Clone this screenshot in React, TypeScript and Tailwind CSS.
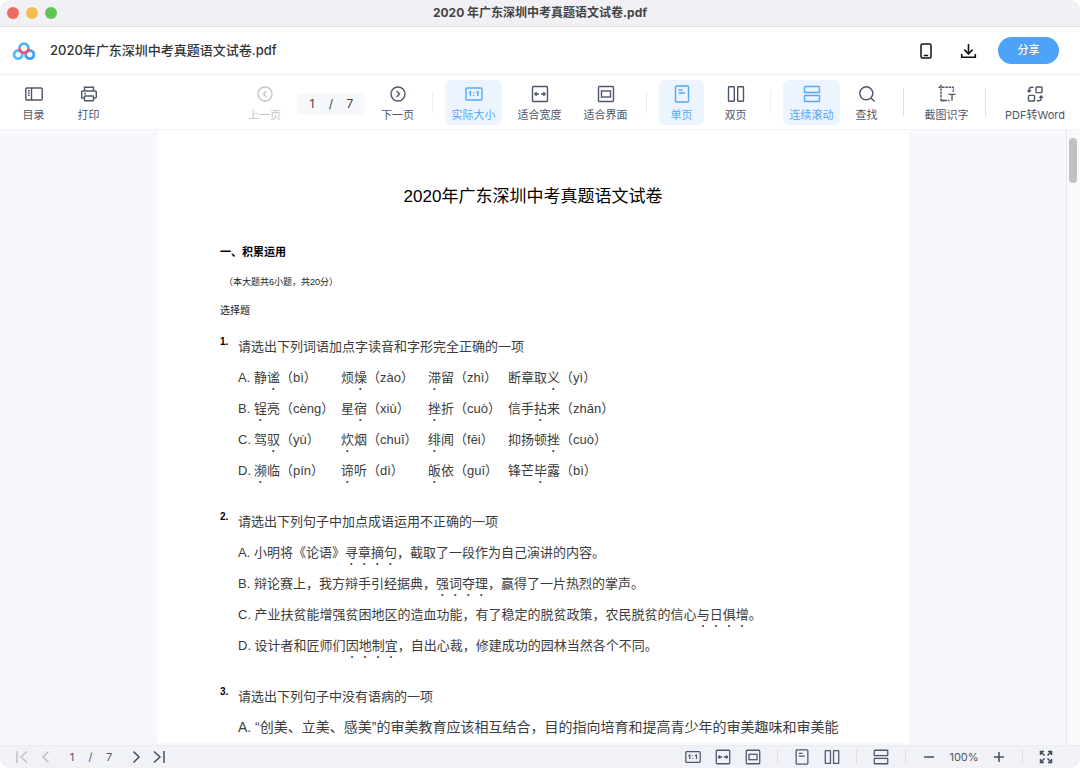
import type { ReactNode } from 'react';

type IconName =
  | 'catalog'
  | 'print'
  | 'prev'
  | 'next'
  | 'actual'
  | 'fitWidth'
  | 'fitPage'
  | 'single'
  | 'double'
  | 'scroll'
  | 'search'
  | 'ocr'
  | 'convert';

const icons: Record<IconName, ReactNode> = {
  catalog: (
    <>
      <rect x="1.8" y="4" width="16.4" height="12" rx="1" />
      <path d="M7.5 4v12M4 6.8h1.6M4 9h1.6M4 11.2h1.6" />
    </>
  ),
  print: (
    <>
      <path d="M5.5 7V3.2h9V7M5.5 14H3.7a1 1 0 0 1-1-1V8a1 1 0 0 1 1-1h12.6a1 1 0 0 1 1 1v5a1 1 0 0 1-1 1h-1.8" />
      <rect x="5.5" y="12" width="9" height="4.8" rx="0.6" />
      <path d="M5 9.6h2" />
    </>
  ),
  prev: (
    <>
      <circle cx="10" cy="10" r="7" />
      <path d="M11.5 7 8.5 10l3 3" />
    </>
  ),
  next: (
    <>
      <circle cx="10" cy="10" r="7" />
      <path d="m8.5 7 3 3-3 3" />
    </>
  ),
  actual: (
    <>
      <rect x="2" y="4" width="16" height="12" rx="1" />
      <path d="M5 8.6 6.4 7.8v4.4M12.4 8.6l1.4-.8v4.4M9.6 8.2v1M9.6 11v1" />
    </>
  ),
  fitWidth: (
    <>
      <rect x="2.5" y="2.5" width="15" height="15" rx="1" />
      <path d="M9 10H5M11 10h4M6.6 8.3 4.9 10l1.7 1.7M13.4 8.3l1.7 1.7-1.7 1.7" />
    </>
  ),
  fitPage: (
    <>
      <rect x="2.5" y="2.5" width="15" height="15" rx="1" />
      <rect x="5.5" y="7" width="9" height="6" />
    </>
  ),
  single: (
    <>
      <rect x="3.5" y="2" width="13" height="16" rx="1" />
      <path d="M6.5 6h4M6.5 9h6.5" />
    </>
  ),
  double: (
    <>
      <rect x="2.5" y="2.8" width="5.8" height="14.4" rx="0.6" />
      <rect x="11.7" y="2.8" width="5.8" height="14.4" rx="0.6" />
    </>
  ),
  scroll: (
    <>
      <rect x="2.5" y="2.5" width="15" height="6" rx="0.6" />
      <rect x="2.5" y="11.5" width="15" height="6" rx="0.6" />
    </>
  ),
  search: (
    <>
      <circle cx="9.3" cy="9.3" r="6.5" />
      <path d="m14 14 3.6 3.6" />
    </>
  ),
  ocr: (
    <>
      <path d="M4 .8v15.7h4.5M1.5 3.2h14.8v4.6" strokeDasharray="2.6 0.8" />
      <path d="M4 16.5h8.5" strokeDasharray="2.6 0.8" />
      <path d="M11.5 10.4h7M15 10.4v6.4" />
    </>
  ),
  convert: (
    <>
      <rect x="11" y="3" width="6" height="5.6" rx="0.8" />
      <rect x="3.5" y="11.4" width="6" height="5.6" rx="0.8" />
      <path d="M8.5 3.2H6.8A2.6 2.6 0 0 0 4.2 5.8v2M2.5 6.3l1.7 1.7 1.7-1.7M11.8 16.8h1.7a2.6 2.6 0 0 0 2.6-2.6v-2M14.4 13.7l1.7-1.7 1.7 1.7" />
    </>
  ),
};

function Icon({ name, className = 'size-5' }: { name: IconName; className?: string }) {
  return (
    <svg viewBox="0 0 20 20" className={className} fill="none" stroke="currentColor" strokeWidth="1.4" aria-hidden="true">
      {icons[name]}
    </svg>
  );
}

function Logo() {
  return (
    <svg viewBox="0 0 24 20" className="h-5 w-6" fill="none" strokeWidth="2.8" aria-hidden="true">
      <circle cx="6.2" cy="13.6" r="4.1" stroke="#4cc0fb" />
      <circle cx="17.8" cy="13.6" r="4.1" stroke="#3f9cf8" />
      <path d="M7.5 7.2a4.5 4.5 0 0 1 9 0" stroke="#45b4fb" />
      <path d="M7.5 7.2a4.5 4.5 0 0 0 9 0" stroke="#f0506c" />
    </svg>
  );
}

type ToolProps = {
  icon: IconName;
  label: string;
  active?: boolean;
  disabled?: boolean;
  width?: string;
};

function Tool({ icon, label, active, disabled, width = 'w-[45px]' }: ToolProps) {
  return (
    <button
      disabled={disabled}
      className={`flex h-[45px] shrink-0 flex-col items-center gap-[3px] rounded-md pt-1 text-[11px] leading-4 whitespace-nowrap ${width} ${
        active ? 'bg-[#ebf4ff] text-[#56a8fa]' : disabled ? 'text-[#c3c4c8]' : 'text-[#50566a]'
      }`}
    >
      <Icon name={icon} />
      {label}
    </button>
  );
}

function Em({ children }: { children: ReactNode }) {
  return <em className="not-italic [text-emphasis-position:under_right] [text-emphasis-style:filled_dot]">{children}</em>;
}

const words: [string, ReactNode[]][] = [
  ['A.', [<>静<Em>谧</Em>（bì）</>, <>烦<Em>燥</Em>（zào）</>, <><Em>滞</Em>留（zhì）</>, <>断章取<Em>义</Em>（yì）</>]],
  ['B.', [<><Em>锃</Em>亮（cèng）</>, <>星<Em>宿</Em>（xiù）</>, <><Em>挫</Em>折（cuò）</>, <>信手<Em>拈</Em>来（zhān）</>]],
  ['C.', [<>驾<Em>驭</Em>（yù）</>, <><Em>炊</Em>烟（chuī）</>, <><Em>绯</Em>闻（fēi）</>, <>抑扬顿<Em>挫</Em>（cuò）</>]],
  ['D.', [<><Em>濒</Em>临（pín）</>, <><Em>谛</Em>听（dì）</>, <><Em>皈</Em>依（guī）</>, <>锋芒<Em>毕</Em>露（bì）</>]],
];

function Question({ no, title, children }: { no: number; title: string; children: ReactNode }) {
  return (
    <section className="mb-5 flex text-[13px] leading-[31px] text-[#3c3c3c]">
      <span className="w-[18px] shrink-0 text-[10px] leading-[22px] font-bold text-black">{no}.</span>
      <div className="min-w-0 flex-1">
        <h3>{title}</h3>
        {children}
      </div>
    </section>
  );
}

function Document() {
  return (
    <article className="mx-auto w-full max-w-[752px] bg-white px-[63px] pt-[52px] font-['Liberation_Sans','Noto_Sans_CJK_SC',sans-serif] text-black">
      <h1 className="text-center text-[17px] leading-[30px]">2020年广东深圳中考真题语文试卷</h1>
      <h2 className="mt-[30px] text-[11px] leading-5 font-bold">一、积累运用</h2>
      <p className="mt-[10px] pl-1 text-[9px] leading-5 text-[#222]">（本大题共6小题，共20分）</p>
      <p className="mt-[9px] mb-[10px] text-[10px] leading-5 text-[#222]">选择题</p>

      <Question no={1} title="请选出下列词语加点字读音和字形完全正确的一项">
        {words.map(([letter, items]) => (
          <div key={letter} className="grid h-[31px] grid-cols-[16px_87px_87px_80px_1fr] whitespace-nowrap">
            <span>{letter}</span>
            {items.map((item, i) => (
              <span key={i}>{item}</span>
            ))}
          </div>
        ))}
      </Question>

      <Question no={2} title="请选出下列句子中加点成语运用不正确的一项">
        <p>A. 小明将《论语》<Em>寻章摘句</Em>，截取了一段作为自己演讲的内容。</p>
        <p>B. 辩论赛上，我方辩手引经据典，<Em>强词夺理</Em>，赢得了一片热烈的掌声。</p>
        <p>C. 产业扶贫能增强贫困地区的造血功能，有了稳定的脱贫政策，农民脱贫的信心<Em>与日俱增</Em>。</p>
        <p>D. 设计者和匠师们<Em>因地制宜</Em>，自出心裁，修建成功的园林当然各个不同。</p>
      </Question>

      <Question no={3} title="请选出下列句子中没有语病的一项">
        <p className="text-[14px]">A. “创美、立美、感美”的审美教育应该相互结合，目的指向培育和提高青少年的审美趣味和审美能</p>
      </Question>
    </article>
  );
}

function TopBar() {
  return (
    <>
      <div className="flex h-[27px] shrink-0 items-center border-b border-[#e2e1e6] bg-[#f1f0f5] px-[7px]">
        <div className="flex flex-1 gap-[7px]">
          <span className="size-3 rounded-full bg-[#ed6a5e]" />
          <span className="size-3 rounded-full bg-[#f4bf4f]" />
          <span className="size-3 rounded-full bg-[#61c554]" />
        </div>
        <div className="text-[12px] font-bold text-[#444]">2020 年广东深圳中考真题语文试卷.pdf</div>
        <div className="flex-1" />
      </div>
      <header className="flex h-12 shrink-0 items-center border-b border-[#ededf0] bg-white pr-[21px] pl-3">
        <Logo />
        <div className="ml-[14px] text-[13px] font-medium text-[#333]">2020年广东深圳中考真题语文试卷.pdf</div>
        <div className="ml-auto flex items-center text-[#111]">
          <button aria-label="手机查看" className="mr-[22px]">
            <svg viewBox="0 0 20 20" className="size-5" fill="none" stroke="currentColor" strokeWidth="1.5">
              <rect x="5" y="3" width="10" height="14" rx="1.5" />
              <path d="M7.8 14.5h4.4" />
            </svg>
          </button>
          <button aria-label="下载" className="mr-5">
            <svg viewBox="0 0 20 20" className="size-5" fill="none" stroke="currentColor" strokeWidth="1.6">
              <path d="M10.5 3v9.5M6.3 8.6l4.2 4.2 4.2-4.2M3.7 13v3.3h13.6V13" />
            </svg>
          </button>
          <button className="h-[27px] w-[61px] rounded-full bg-[#4da3f8] text-[11px] font-medium text-white">分享</button>
        </div>
      </header>
    </>
  );
}

function Toolbar() {
  const light = 'mx-3 h-[22px] w-px shrink-0 bg-[#efeff2]';
  const dark = 'h-7 w-px shrink-0 bg-[#dedfe3]';
  const wide = 'w-[57px]';
  return (
    <nav className="flex h-[55px] shrink-0 items-center border-b border-[#f3f4f7] bg-white pr-2 pl-[11px]">
      <div className="flex gap-[10px]">
        <Tool icon="catalog" label="目录" />
        <Tool icon="print" label="打印" />
      </div>
      <div className="ml-auto flex items-center gap-[10px]">
        <Tool icon="prev" label="上一页" disabled />
        <div className="mt-1 flex h-[22px] w-[68px] items-center rounded bg-[#f7f8fc] text-[12px] text-[#444]">
          <input aria-label="页码" defaultValue="1" className="w-[30px] min-w-0 text-center" />
          <span className="w-2 text-center">/</span>
          <span className="w-[30px] text-center">7</span>
        </div>
        <Tool icon="next" label="下一页" />
      </div>
      <span className={light} />
      <div className="flex gap-[9px]">
        <Tool icon="actual" label="实际大小" active width={wide} />
        <Tool icon="fitWidth" label="适合宽度" width={wide} />
        <Tool icon="fitPage" label="适合界面" width={wide} />
      </div>
      <span className={light} />
      <div className="flex gap-[9px]">
        <Tool icon="single" label="单页" active />
        <Tool icon="double" label="双页" />
      </div>
      <span className={light} />
      <div className="flex gap-1">
        <Tool icon="scroll" label="连续滚动" active width={wide} />
        <Tool icon="search" label="查找" />
      </div>
      <span className={`mx-[14px] ${dark}`} />
      <Tool icon="ocr" label="截图识字" width={wide} />
      <span className={`mr-3 ml-[10px] ${dark}`} />
      <Tool icon="convert" label="PDF转Word" width="w-[74px]" />
    </nav>
  );
}

function Chevron({ d, label, disabled }: { d: string; label: string; disabled?: boolean }) {
  return (
    <button aria-label={label} disabled={disabled} className={disabled ? 'text-[#bfc0c5]' : 'text-[#454c60]'}>
      <svg viewBox="0 0 16 16" className="size-4" fill="none" stroke="currentColor" strokeWidth="1.5">
        <path d={d} />
      </svg>
    </button>
  );
}

function ViewButton({ icon, label }: { icon: IconName; label: string }) {
  return (
    <button aria-label={label}>
      <Icon name={icon} className="size-[18px]" />
    </button>
  );
}

function StatusBar() {
  const rule = 'mx-[15px] h-[14px] w-px bg-[#dcdee4]';
  return (
    <footer className="flex h-[23px] shrink-0 items-center border-t border-[#ebecf1] bg-[#f1f2f7] pr-[26px] pl-[14px] text-[11px] text-[#50566a]">
      <Chevron d="M3 2v12M13 2.5 7 8l6 5.5" label="首页" disabled />
      <span className="w-2" />
      <Chevron d="M10.5 2.5 5 8l5.5 5.5" label="上一页" disabled />
      <span className="ml-[14px] w-2 text-center">1</span>
      <span className="w-[29px] text-center">/</span>
      <span className="w-2 text-center">7</span>
      <span className="w-[15px]" />
      <Chevron d="M5.5 2.5 11 8l-5.5 5.5" label="下一页" />
      <span className="w-[7px]" />
      <Chevron d="m3 2.5 6 5.5-6 5.5M13 2v12" label="末页" />

      <div className="ml-auto flex items-center">
        <div className="flex gap-3">
          <ViewButton icon="actual" label="实际大小" />
          <ViewButton icon="fitWidth" label="适合宽度" />
          <ViewButton icon="fitPage" label="适合界面" />
        </div>
        <span className={rule} />
        <div className="flex gap-3">
          <ViewButton icon="single" label="单页" />
          <ViewButton icon="double" label="双页" />
        </div>
        <span className={rule} />
        <ViewButton icon="scroll" label="连续滚动" />
        <span className={rule} />
        <Chevron d="M3 8h10" label="缩小" />
        <span className="w-[54px] text-center">100%</span>
        <Chevron d="M3 8h10M8 3v10" label="放大" />
        <span className={rule} />
        <Chevron
          d="M2.5 6V2.5H6M2.5 2.5l4 4M10 2.5h3.5V6M13.5 2.5l-4 4M2.5 10v3.5H6M2.5 13.5l4-4M13.5 10v3.5H10M13.5 13.5l-4-4"
          label="全屏"
        />
      </div>
    </footer>
  );
}

export default function App() {
  return (
    <div className="h-screen bg-white">
      <div className="flex h-full flex-col overflow-hidden rounded-[10px] font-['Inter','Noto_Sans_CJK_SC',sans-serif]">
        <TopBar />
        <Toolbar />
        <main className="flex min-h-0 flex-1 bg-[#f7f8fc]">
          <div className="min-w-0 flex-1 overflow-hidden">
            <Document />
          </div>
          <div className="w-[14px] shrink-0 border-l border-[#e8e8e8] bg-[#fafafa] px-[2px] pt-2">
            <div className="h-[45px] w-2 rounded-full bg-[#c1c1c1]" />
          </div>
        </main>
        <StatusBar />
      </div>
    </div>
  );
}
